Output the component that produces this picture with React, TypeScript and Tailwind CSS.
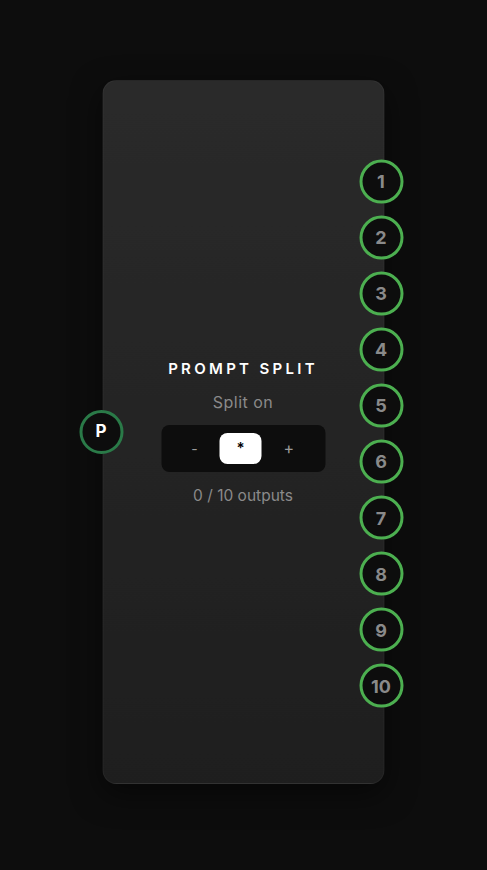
import React from "react";

const outputs = [1, 2, 3, 4, 5, 6, 7, 8, 9, 10];

export default function App() {
  return (
    <div
      className="min-h-[870px] w-full bg-[#0d0d0d] pt-[80px]"
      style={{ fontFamily: "Inter, 'Noto Sans', sans-serif" }}
    >
      <div className="relative mx-auto h-[704px] w-[282px] -translate-x-[0.5px] rounded-[14px] border border-[#ffffff0a] bg-gradient-to-b from-[#2a2a2a] to-[#1e1e1e] shadow-[0_10px_30px_rgba(0,0,0,0.5)]">
        <div className="flex h-full flex-col items-center justify-center">
          <div className="text-[15px] font-semibold leading-none tracking-[0.22em] text-white">
            PROMPT SPLIT
          </div>
          <div className="mt-[18px] text-[16px] leading-none tracking-[0.03em] text-[#8a8a8a]">
            Split on
          </div>
          <div className="mt-[15px] flex h-[47px] w-[164px] items-center justify-center gap-0 rounded-[8px] bg-[#0d0d0d] pr-[3px]">
            <span className="w-[10px] text-center text-[14px] text-[#9a9a9a]">-</span>
            <div className="ml-[20px] flex h-[31px] w-[42px] items-center justify-center rounded-[8px] bg-white text-[15px] font-semibold text-black">
              *
            </div>
            <span className="ml-[22px] w-[10px] text-center text-[16px] text-[#9a9a9a]">+</span>
          </div>
          <div className="mt-[16px] text-[15.5px] leading-none text-[#8a8a8a]">0 / 10 outputs</div>
        </div>

        <div className="absolute left-[-24px] top-1/2 flex h-[44px] w-[44px] -translate-y-1/2 items-center justify-center rounded-full border-[3px] border-[#2a7a48] bg-[#0d0d0d] text-[17px] font-bold text-white">
          P
        </div>

        <div className="absolute right-[-20px] top-[calc(50%+1.5px)] flex -translate-y-1/2 flex-col gap-[12.1px]">
          {outputs.map((n) => (
            <div
              key={n}
              className="flex h-[44px] w-[44px] items-center justify-center rounded-full border-[3px] border-[#4caf50] bg-[#0d0d0d] text-[18px] font-bold text-[#8a8a8a]"
            >
              {n}
            </div>
          ))}
        </div>
      </div>
    </div>
  );
}
